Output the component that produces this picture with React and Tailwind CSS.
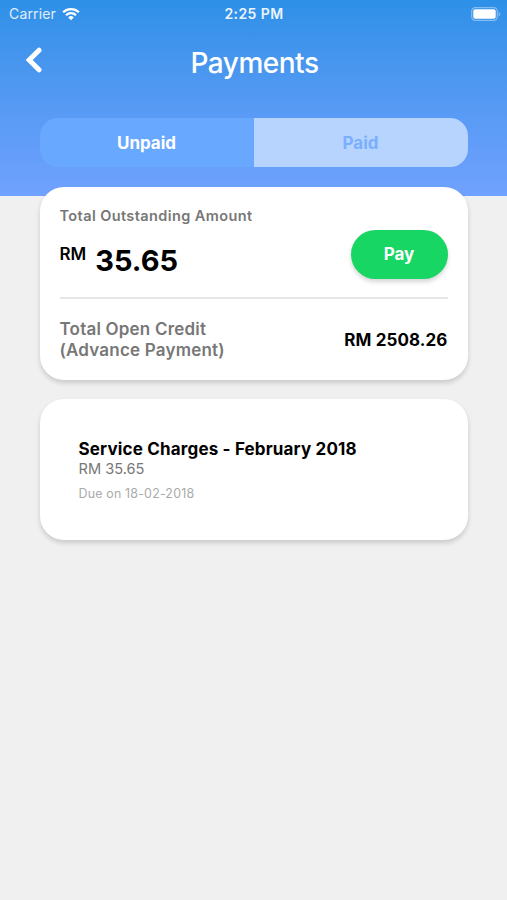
import { useState } from "react";

const charges = [
  { id: 1, title: "Service Charges - February 2018", amount: "RM 35.65", due: "Due on 18-02-2018" },
];

function App() {
  const [tab, setTab] = useState("unpaid");

  return (
    <div className="min-h-screen w-[507px] bg-[#f0f0f0] font-['Inter',sans-serif] text-black">
      <header className="h-[196px] bg-linear-to-b from-[#2d90e7] to-[#70a2ff]">
        <StatusBar />

        <div className="grid grid-cols-[68px_1fr_68px] items-center h-[71px]">
          <button type="button" aria-label="Back" className="pl-[25px] pb-[5px]">
            <svg width="17" height="26" viewBox="0 0 17 26" fill="none" stroke="white" strokeWidth="5">
              <path d="M14 3.2 4.2 13l9.8 9.8" strokeLinecap="round" strokeLinejoin="miter" />
            </svg>
          </button>
          <h1 className="pl-[2px] text-center text-[28px] leading-8 font-medium tracking-[-0.5px] text-white">Payments</h1>
        </div>

        <div className="mx-auto mt-5 flex h-[49px] w-[428px] overflow-hidden rounded-[18px]">
          <Tab label="Unpaid" active={tab === "unpaid"} onClick={() => setTab("unpaid")} />
          <Tab label="Paid" active={tab === "paid"} onClick={() => setTab("paid")} />
        </div>
      </header>

      <main className="relative mx-auto -mt-[9.5px] flex w-[428px] flex-col gap-[19.5px]">
        <section className="h-[193px] rounded-[24px] bg-white px-5 pt-[19px] shadow-[0_3px_5px_rgba(0,0,0,0.16)]">
          <p className="text-[14.5px] leading-[19px] font-semibold tracking-[0.4px] text-[#777]">Total Outstanding Amount</p>
          <div className="flex h-[74px] items-start justify-between border-b-2 border-[#e6e6e6]">
            <div className="flex items-start">
              <span className="mt-[19px] text-[17px] leading-5 font-semibold">RM</span>
              <span className="mt-[18px] ml-[9px] text-[29px] leading-9 font-bold">35.65</span>
            </div>
            <button type="button"
              className="mt-[5px] h-[49px] w-[97px] rounded-full bg-[#18d664] pt-px text-[17px] font-bold text-white shadow-[0_3px_4px_rgba(0,0,0,0.16)]">
              Pay
            </button>
          </div>
          <div className="mt-5 flex items-center justify-between text-[17px] leading-[21px]">
            <p className="font-semibold tracking-[0.2px] text-[#777]">
              Total Open Credit
              <br />
              (Advance Payment)
            </p>
            <p className="pt-px font-bold tracking-[0.1px]">RM 2508.26</p>
          </div>
        </section>

        {charges.map((c) => (
          <section key={c.id} className="h-[141px] rounded-[24px] bg-white px-[39px] pt-[40px] shadow-[0_3px_5px_rgba(0,0,0,0.16)]">
            <h2 className="text-[17px] leading-5 font-bold tracking-[0.17px]">{c.title}</h2>
            <p className="text-[14.6px] leading-5 text-[#777]">{c.amount}</p>
            <p className="mt-[7px] text-[12.4px] leading-4 tracking-[0.2px] text-[#aaa]">{c.due}</p>
          </section>
        ))}
      </main>
    </div>
  );
}

function StatusBar() {
  return (
    <div className="grid h-[27px] grid-cols-3 items-center pr-[6px] pl-[9px] text-[14px] text-white">
      <div className="flex items-center gap-[6px]">
        <span className="tracking-[0.15px] text-white/85">Carrier</span>
        <svg width="18" height="14" viewBox="0 0 19 14" fill="none" stroke="white" strokeWidth="2.4">
          <path d="M1.2 5.1a12 12 0 0 1 16.6 0" />
          <path d="M4.2 8.3a7.7 7.7 0 0 1 10.6 0" />
          <path d="M9.5 13.5 6.6 10.6a4.2 4.2 0 0 1 5.8 0Z" fill="white" stroke="none" />
        </svg>
      </div>
      <span className="pr-[2px] text-center text-[14px] font-semibold tracking-[0.4px] text-white/90">2:25 PM</span>
      <svg width="30" height="14" viewBox="0 0 30 14" className="justify-self-end">
        <rect x="0.7" y="0.7" width="25.6" height="12.6" rx="3.6" fill="none" stroke="white" strokeOpacity="0.4" strokeWidth="1.2" />
        <rect x="2.3" y="2.3" width="22.4" height="9.4" rx="2" fill="white" />
        <path d="M27.6 4.8c2.2.8 2.2 3.6 0 4.4Z" fill="white" fillOpacity="0.4" />
      </svg>
    </div>
  );
}

function Tab({ label, active, onClick }) {
  return (
    <button type="button" onClick={onClick}
      className={`flex-1 pt-[2px] text-[17px] font-bold ${active ? "bg-[#68a8ff] text-white" : "bg-[#b7d4ff] text-[#7aafff]"}`}>
      {label}
    </button>
  );
}

export default App;
